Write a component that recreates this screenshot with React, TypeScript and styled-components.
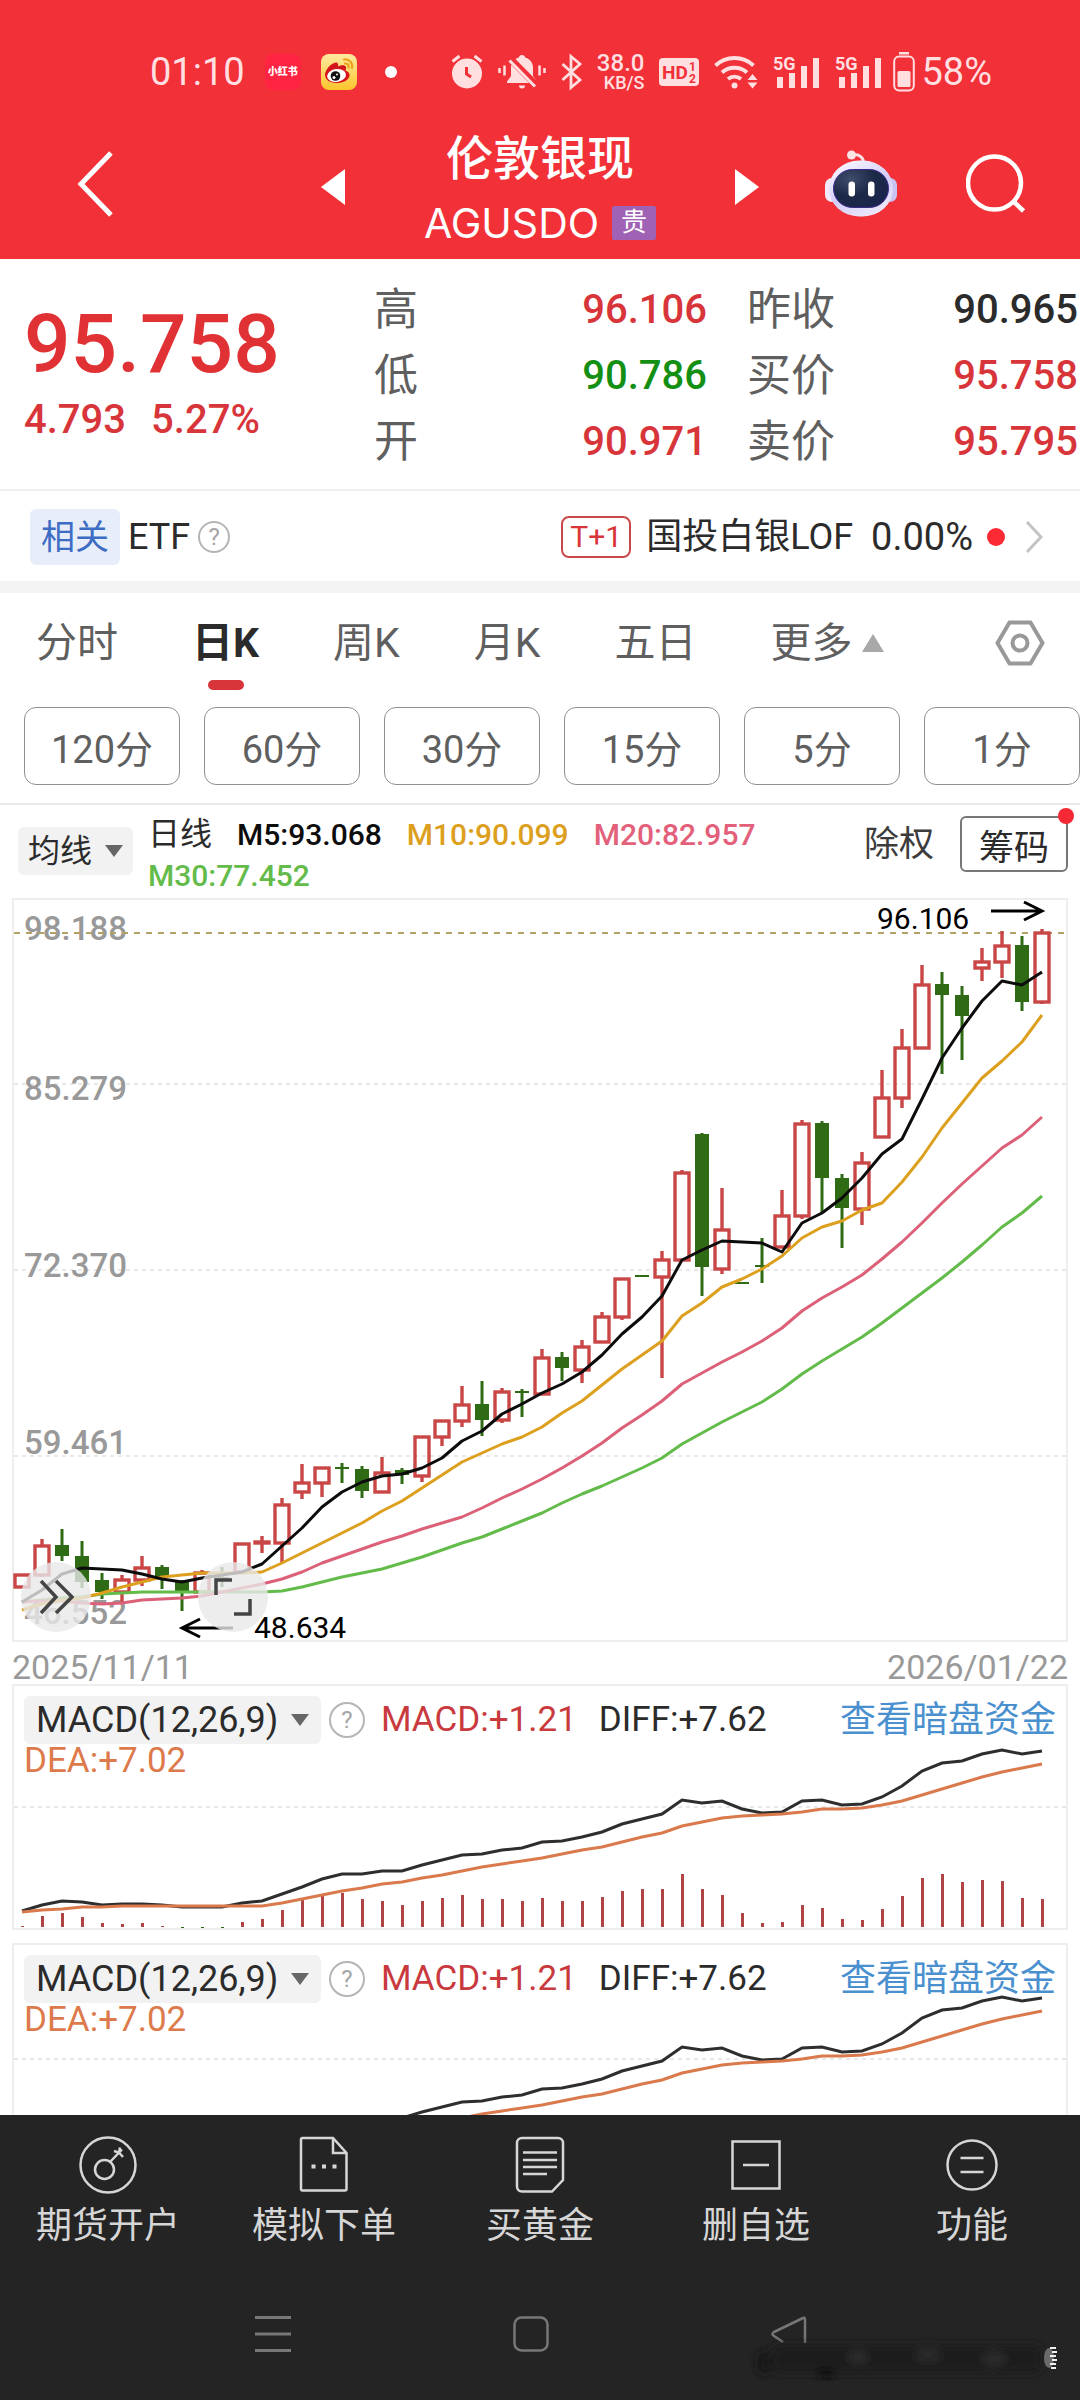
import React from 'react';
import styled, { createGlobalStyle } from 'styled-components';

const RED = '#d8353a';
const GREEN = '#138f13';
const INK = '#2b2b2b';
const GREY = '#5f5f5f';

const GlobalStyle = createGlobalStyle`
  * { box-sizing: border-box; }
  body {
    margin: 0;
    background: #ffffff;
    color: ${INK};
    font-family: Roboto, "Noto Sans CJK SC", sans-serif;
  }
  button, select { font: inherit; color: inherit; margin: 0; }
`;

const Page = styled.div`
  display: flex;
  flex-direction: column;
  height: 100vh;
  overflow: hidden;
`;

const PlainButton = styled.button`
  display: flex;
  align-items: center;
  justify-content: center;
  padding: 0;
  border: 0;
  background: none;
  svg { display: block; }
`;

/* ---------- Header ---------- */

const Header = styled.header`
  flex: none;
  background: #f23038;
  color: #ffffff;
`;

const StatusBar = styled.div`
  display: flex;
  justify-content: space-between;
  align-items: center;
  height: 112px;
  padding: 32px 88px 0 150px;
  color: #ffdfe0;
  font-size: 38px;
  line-height: 40px;
  svg { display: block; overflow: visible; }
`;

const StatusGroup = styled.div<{ $gap: number }>`
  display: flex;
  align-items: center;
  gap: ${p => p.$gap}px;
`;

const AppBadge = styled.span`
  width: 36px;
  height: 36px;
  border-radius: 8px;
  background: #ff2442;
  color: #ffffff;
  font-size: 10px;
  font-weight: 900;
  line-height: 36px;
  text-align: center;
  white-space: nowrap;
`;

const Dot = styled.span<{ $size: number; $color: string }>`
  flex: none;
  width: ${p => p.$size}px;
  height: ${p => p.$size}px;
  border-radius: 50%;
  background: ${p => p.$color};
`;

const NetSpeed = styled.span`
  display: flex;
  flex-direction: column;
  align-items: flex-end;
  font-weight: 500;
  font-size: 24px;
  line-height: 22px;
  small { font-size: 18px; line-height: 18px; }
`;

const NavBar = styled.div`
  display: grid;
  grid-template-columns: 1fr auto 1fr;
  align-items: center;
  height: 147px;
  padding: 0 55px 4px;
`;

const BackButton = styled(PlainButton)`
  justify-self: start;
  padding-left: 22px;
`;

const NavCenter = styled.div`
  display: flex;
  align-items: center;
  padding-top: 6px;
`;

const NavRight = styled.div`
  display: flex;
  justify-content: flex-end;
  align-items: center;
  gap: 69px;
`;

const TitleBlock = styled.div`
  min-width: 390px;
  padding-top: 8px;
  text-align: center;
`;

const Title = styled.h1`
  margin: 0;
  font-size: 47px;
  font-weight: 500;
  line-height: 64px;
`;

const Symbol = styled.div`
  display: flex;
  align-items: center;
  justify-content: center;
  gap: 13px;
  font-family: Inter, "Noto Sans CJK SC", sans-serif;
  font-size: 41px;
  line-height: 64px;
`;

const MetalTag = styled.span`
  width: 44px;
  height: 34px;
  border-radius: 2px;
  background: #9f62b4;
  font-size: 26px;
  line-height: 32px;
`;

/* ---------- Quote ---------- */

const Content = styled.main`
  flex: 1;
  min-height: 0;
  overflow: hidden;
`;

const Quote = styled.section`
  display: grid;
  grid-template-columns: 350fr 333fr 371fr;
  height: 232px;
  padding: 18px 2px 0 24px;
  border-bottom: 2px solid #efefef;
`;

const Price = styled.div`
  padding-top: 16px;
  color: #e03234;
  font-size: 82px;
  font-weight: 500;
  line-height: 102px;
`;

const Change = styled.div`
  display: flex;
  gap: 25px;
  color: ${RED};
  font-size: 40px;
  font-weight: 500;
  line-height: 50px;
`;

const StatColumn = styled.dl<{ $inset?: boolean }>`
  margin: 0;
  padding-left: ${p => (p.$inset ? 40 : 0)}px;
`;

const Stat = styled.div`
  display: flex;
  justify-content: space-between;
  line-height: 66px;
  dt { font-size: 44px; color: ${GREY}; }
`;

const StatValue = styled.dd<{ $color: string }>`
  margin: 0;
  color: ${p => p.$color};
  font-size: 40px;
  font-weight: 500;
`;

const Related = styled.section`
  display: flex;
  align-items: center;
  height: 90px;
  padding: 2px 37px 0 30px;
  font-size: 36px;
  line-height: 40px;
`;

const RelatedTag = styled.span`
  margin-right: 8px;
  padding: 8px 11px;
  border-radius: 6px;
  background: #e8edfa;
  color: #3d6cc4;
  font-size: 34px;
`;

const HelpSpace = styled.span`
  padding-left: 8px;
`;

const HelpButton = styled(PlainButton)<{ $size: number }>`
  flex: none;
  width: ${p => p.$size}px;
  height: ${p => p.$size}px;
  border: 2px solid #b5b5b5;
  border-radius: 50%;
  color: #a5a5a5;
  font-size: 24px;
  line-height: 24px;
`;

const RelatedFund = styled.a`
  display: flex;
  align-items: center;
  margin-left: auto;
  color: ${INK};
  text-decoration: none;
`;

const SettleTag = styled.span`
  margin-right: 15px;
  padding: 0 7px;
  border: 2px solid #c9484c;
  border-radius: 8px;
  color: ${RED};
  font-size: 30px;
  line-height: 38px;
`;

const FundChange = styled.span`
  margin: 0 14px 0 18px;
  font-size: 38px;
`;

const Chevron = styled.svg`
  display: block;
  margin-left: 20px;
`;

const Band = styled.div`
  height: 12px;
  background: #f4f4f4;
`;

/* ---------- Period tabs ---------- */

const Tabs = styled.nav`
  display: flex;
  align-items: flex-start;
  gap: 74px;
  padding: 22px 35px 17px 36px;
  color: ${GREY};
  font-size: 41px;
  line-height: 56px;
`;

const Tab = styled(PlainButton)<{ $active?: boolean }>`
  flex-direction: column;
  gap: 9px;
  color: ${p => (p.$active ? INK : GREY)};
  font-weight: ${p => (p.$active ? 700 : 400)};
  &::after {
    content: '';
    width: 36px;
    height: 10px;
    border-radius: 5px;
    background: ${p => (p.$active ? RED : 'transparent')};
  }
`;

const MoreLabel = styled.span`
  display: flex;
  align-items: center;
  gap: 9px;
`;

const Settings = styled(PlainButton)`
  margin-left: auto;
  height: 56px;
`;

const Minutes = styled.div`
  display: grid;
  grid-template-columns: repeat(6, 1fr);
  gap: 24px;
  padding: 0 0 18px 24px;
  border-bottom: 2px solid #e9e9e9;
`;

const MinuteButton = styled.button`
  height: 78px;
  padding: 0;
  border: 1px solid #8f8f8f;
  border-radius: 12px;
  background: none;
  color: ${GREY};
  font-size: 38px;
`;

/* ---------- Moving averages ---------- */

const Averages = styled.section`
  display: flex;
  align-items: flex-start;
  height: 93px;
  padding: 9px 12px 0 18px;
`;

const Picker = styled.label<{ $top: number; $size: number; $pad: number }>`
  display: flex;
  align-items: center;
  flex: none;
  gap: 12px;
  height: 48px;
  margin-top: ${p => p.$top}px;
  padding: 0 ${p => p.$pad}px;
  border-radius: 6px;
  background: #f2f2f2;
  color: ${INK};
  font-size: ${p => p.$size}px;
  select {
    appearance: none;
    padding: 0;
    border: 0;
    background: none;
    line-height: 48px;
  }
`;

const Legend = styled.div`
  display: flex;
  flex-wrap: wrap;
  align-items: baseline;
  flex: 1;
  column-gap: 25px;
  padding-left: 15px;
  font-size: 30px;
  line-height: 41px;
`;

const LegendName = styled.span`
  font-size: 32px;
`;

const LegendItem = styled.span<{ $color: string }>`
  color: ${p => p.$color};
  font-weight: 500;
`;

const AdjustButton = styled(PlainButton)`
  flex: none;
  margin: 9px 26px 0 0;
  color: #3c3c3c;
  font-size: 35px;
  line-height: 44px;
`;

const ChipsButton = styled(PlainButton)`
  position: relative;
  flex: none;
  width: 108px;
  height: 56px;
  margin-top: 2px;
  border: 2px solid #777777;
  border-radius: 6px;
  font-size: 35px;
  ${Dot} { position: absolute; top: -10px; right: -8px; }
`;

/* ---------- Charts ---------- */

const ChartBox = styled.section`
  position: relative;
  margin: 0 12px;
  border: 2px solid #eeeeee;
`;

const ChartSvg = styled.svg`
  display: block;
  overflow: visible;
  width: 100%;
  height: auto;
  font-family: Roboto, sans-serif;
`;

const FloatButton = styled(PlainButton)<{ $left: number }>`
  position: absolute;
  bottom: 8px;
  left: ${p => p.$left}px;
  width: 70px;
  height: 70px;
  border-radius: 50%;
  background: rgba(232, 232, 232, 0.8);
`;

const DateRow = styled.div`
  display: flex;
  justify-content: space-between;
  height: 42px;
  padding: 0 12px;
  color: #999999;
  font-size: 34px;
  line-height: 50px;
`;

const MacdBox = styled.section`
  position: relative;
  height: 246px;
  margin: 0 12px 13px;
  padding: 10px 10px 0;
  border: 2px solid #eeeeee;
  font-size: 35px;
`;

const MacdSvg = styled.svg`
  position: absolute;
  inset: 0;
  width: 100%;
  height: 100%;
  pointer-events: none;
`;

const MacdHead = styled.div`
  display: flex;
  align-items: center;
  height: 48px;
`;

const MacdValue = styled.span<{ $color: string; $left: number }>`
  display: block;
  margin-left: ${p => p.$left}px;
  color: ${p => p.$color};
  line-height: 34px;
`;

const FundsLink = styled.a`
  margin-left: auto;
  color: #4a90cf;
  font-size: 36px;
  line-height: 48px;
  text-decoration: none;
`;

/* ---------- Footer ---------- */

const Footer = styled.footer`
  flex: none;
  height: 285px;
  background: #242424;
  color: #d6d6d6;
`;

const Actions = styled.nav`
  display: grid;
  grid-template-columns: repeat(5, 1fr);
  padding-top: 20px;
`;

const Action = styled(PlainButton)`
  flex-direction: column;
  font-size: 36px;
  line-height: 62px;
`;

const SystemNav = styled.div`
  position: relative;
  display: flex;
  justify-content: center;
  gap: 222px;
  padding: 59px 18px 0 0;
`;

const Smudge = styled.svg`
  position: absolute;
  right: 20px;
  top: 80px;
`;

/* ---------- Data ---------- */

const FIRST_X = 22;
const STEP = 20;
const xOf = (i: number) => FIRST_X + i * STEP;

type Candle = [up: number, top: number, bottom: number, high: number, low: number];

const candles: Candle[] = [
  [1, 1574, 1586, 1574, 1588], [1, 1545, 1574, 1539, 1577], [0, 1545, 1556, 1529, 1561],
  [0, 1556, 1582, 1541, 1588], [0, 1580, 1592, 1573, 1599], [1, 1579, 1591, 1575, 1603],
  [1, 1567, 1579, 1556, 1586], [0, 1567, 1577, 1565, 1589], [0, 1582, 1592, 1580, 1611],
  [1, 1572, 1591, 1570, 1592], [0, 1577, 1579, 1567, 1587], [1, 1543, 1571, 1543, 1571],
  [1, 1541, 1542, 1536, 1553], [1, 1504, 1542, 1498, 1563], [1, 1482, 1491, 1464, 1499],
  [1, 1467, 1482, 1467, 1497], [0, 1467, 1469, 1463, 1483], [0, 1469, 1491, 1466, 1498],
  [1, 1472, 1491, 1457, 1493], [0, 1470, 1475, 1468, 1484], [1, 1436, 1475, 1436, 1482],
  [1, 1420, 1436, 1420, 1446], [1, 1404, 1420, 1386, 1427], [0, 1404, 1420, 1381, 1436],
  [1, 1391, 1419, 1388, 1423], [0, 1391, 1393, 1389, 1417], [1, 1357, 1393, 1349, 1393],
  [0, 1357, 1368, 1352, 1381], [1, 1346, 1369, 1340, 1383], [1, 1316, 1341, 1312, 1341],
  [1, 1278, 1316, 1278, 1320], [0, 1275, 1277, 1275, 1277], [1, 1259, 1276, 1251, 1378],
  [1, 1172, 1259, 1170, 1259], [0, 1134, 1267, 1133, 1296], [1, 1229, 1268, 1188, 1274],
  [0, 1282, 1284, 1282, 1284], [0, 1265, 1267, 1238, 1283], [1, 1215, 1246, 1190, 1246],
  [1, 1123, 1215, 1120, 1219], [0, 1123, 1178, 1121, 1213], [0, 1178, 1208, 1174, 1248],
  [1, 1162, 1208, 1152, 1225], [1, 1097, 1136, 1070, 1138], [1, 1047, 1097, 1029, 1108],
  [1, 984, 1047, 965, 1049], [0, 984, 995, 972, 1074], [0, 995, 1016, 986, 1060],
  [1, 961, 967, 948, 981], [1, 945, 961, 931, 978], [0, 945, 1002, 936, 1011],
  [1, 932, 1001, 929, 1004],
];

const averages = [
  {
    name: 'M30', color: '#63bb4a',
    ys: [1602, 1600, 1598, 1597, 1594, 1593, 1592, 1592, 1592, 1592, 1592, 1592, 1592, 1591, 1587, 1582, 1577, 1573, 1569, 1563, 1557, 1550, 1543, 1537, 1529, 1521, 1513, 1503, 1494, 1486, 1477, 1468, 1458, 1444, 1433, 1422, 1412, 1402, 1389, 1374, 1361, 1349, 1337, 1323, 1308, 1293, 1278, 1262, 1245, 1227, 1213, 1196],
  },
  {
    name: 'M20', color: '#dc6078',
    ys: [1602, 1601, 1601, 1603, 1604, 1603, 1600, 1599, 1598, 1596, 1592, 1588, 1584, 1579, 1572, 1563, 1556, 1549, 1542, 1536, 1529, 1523, 1517, 1508, 1498, 1489, 1479, 1468, 1456, 1443, 1428, 1415, 1401, 1384, 1373, 1362, 1352, 1341, 1328, 1311, 1298, 1287, 1275, 1259, 1242, 1223, 1203, 1184, 1166, 1148, 1135, 1117],
  },
  {
    name: 'M10', color: '#dd9f1e',
    ys: [1610, 1604, 1600, 1598, 1593, 1587, 1582, 1577, 1575, 1573, 1573, 1573, 1572, 1563, 1553, 1543, 1533, 1523, 1511, 1501, 1488, 1475, 1462, 1453, 1444, 1437, 1427, 1413, 1401, 1385, 1369, 1355, 1341, 1316, 1303, 1287, 1279, 1269, 1256, 1238, 1227, 1221, 1210, 1203, 1182, 1157, 1128, 1103, 1078, 1061, 1042, 1015],
  },
  {
    name: 'M5', color: '#0c0c0c',
    ys: [1602, 1590, 1574, 1568, 1569, 1570, 1574, 1579, 1582, 1578, 1575, 1572, 1564, 1546, 1528, 1507, 1492, 1482, 1476, 1474, 1468, 1458, 1441, 1431, 1414, 1404, 1393, 1384, 1372, 1355, 1334, 1317, 1296, 1260, 1250, 1241, 1242, 1243, 1252, 1223, 1213, 1198, 1178, 1154, 1139, 1099, 1058, 1028, 1001, 981, 985, 972],
  },
];

const diff = [1911, 1905, 1901, 1902, 1905, 1904, 1904, 1905, 1907, 1907, 1907, 1903, 1901, 1894, 1887, 1879, 1874, 1874, 1871, 1871, 1865, 1860, 1855, 1854, 1850, 1848, 1842, 1841, 1837, 1832, 1824, 1819, 1814, 1800, 1803, 1801, 1809, 1813, 1812, 1801, 1800, 1805, 1804, 1797, 1786, 1771, 1763, 1761, 1754, 1750, 1754, 1751];
const dea = [1912, 1910, 1909, 1907, 1907, 1906, 1906, 1906, 1906, 1906, 1906, 1906, 1906, 1903, 1899, 1895, 1891, 1888, 1884, 1882, 1878, 1875, 1871, 1867, 1864, 1861, 1858, 1854, 1850, 1847, 1842, 1837, 1833, 1826, 1822, 1818, 1816, 1815, 1814, 1812, 1809, 1809, 1808, 1805, 1801, 1795, 1789, 1783, 1777, 1772, 1768, 1764];
const bars = [1, 11, 14, 10, 4, 3, 4, 1, -1, -1, -1, 5, 8, 17, 27, 31, 34, 28, 26, 22, 26, 29, 32, 28, 28, 26, 29, 26, 26, 30, 36, 38, 38, 53, 38, 32, 14, 4, 5, 22, 19, 8, 7, 18, 31, 49, 53, 45, 47, 46, 29, 28];

const line = (ys: number[]) => ys.map((y, i) => `${xOf(i)},${y}`).join(' ');

const axis = [
  { label: '98.188', y: 940 },
  { label: '85.279', y: 1100 },
  { label: '72.370', y: 1277 },
  { label: '59.461', y: 1454 },
  { label: '46.552', y: 1624 },
];

const stats = [
  [
    { name: '高', value: '96.106', color: RED },
    { name: '低', value: '90.786', color: GREEN },
    { name: '开', value: '90.971', color: RED },
  ],
  [
    { name: '昨收', value: '90.965', color: INK },
    { name: '买价', value: '95.758', color: RED },
    { name: '卖价', value: '95.795', color: RED },
  ],
];

/* ---------- Icons ---------- */

const Caret = ({ up, size = 18, color = '#666666' }: { up?: boolean; size?: number; color?: string }) => (
  <svg width={size} height={size - 4} viewBox="0 0 18 14" preserveAspectRatio="none" aria-hidden="true">
    <path d={up ? 'M9 0 18 14H0z' : 'M0 1h18L9 13z'} fill={color} />
  </svg>
);

const WeiboIcon = () => (
  <svg width="36" height="36" viewBox="0 0 36 36" aria-hidden="true">
    <defs>
      <linearGradient id="weiboBg" x1="0" y1="0" x2="0" y2="1">
        <stop offset="0" stopColor="#ffe9a0" />
        <stop offset="1" stopColor="#fbc52c" />
      </linearGradient>
    </defs>
    <rect width="36" height="36" rx="8" fill="url(#weiboBg)" />
    <path d="M4 21c0-5 6-12 11-12.500 2 0 2.500 2 2 4 3-1.500 7-2 8 .5.500 1.500-.5 2.500-.5 3.500 3 1 4.500 3 4 5.500-1 4.500-7 7-13 7S4 26 4 21z" fill="#d5151c" />
    <ellipse cx="15.500" cy="21.500" rx="9.500" ry="6.500" fill="#fff" transform="rotate(-8 15.500 21.500)" />
    <circle cx="14.500" cy="22" r="4.800" fill="#111" />
    <circle cx="13" cy="23.500" r="1.500" fill="#fff" />
    <circle cx="16" cy="20.500" r="1" fill="#fff" />
    <path d="M23 5.500c5-.8 9 3.500 8 8.500M24 9.500c2.600-.2 4 1.700 3.600 4" fill="none" stroke="#eda11b" strokeWidth="2.200" strokeLinecap="round" />
  </svg>
);

const AlarmIcon = () => (
  <svg width="32" height="36" viewBox="0 0 32 36" fill="none" stroke="currentColor" aria-hidden="true">
    <circle cx="16" cy="19.500" r="15" fill="currentColor" stroke="none" />
    <path d="M1.500 7.500 8.500 2M30.500 7.500 23.500 2" strokeWidth="3" />
    <path d="M15.500 13v7l4.500 3" stroke="#f23038" strokeWidth="3" />
  </svg>
);

const MuteIcon = () => (
  <svg width="48" height="36" viewBox="0 0 48 36" fill="none" aria-hidden="true">
    <path d="M24 1c2 0 3 1.200 3 2.600 5 1.200 8 5.200 8 10.400v8l4 5.500V29H9v-1.500L13 22v-8c0-5.200 3-9.200 8-10.400C21 2.200 22 1 24 1z" fill="currentColor" />
    <path d="M21 31.500h6a3 3 0 0 1-6 0z" fill="currentColor" />
    <path d="M11 3.500 39 32" stroke="#f23038" strokeWidth="7" />
    <path d="M11.500 6.500 37 32.500" stroke="currentColor" strokeWidth="3" />
    <path d="M1.500 14v5M6.500 11.500v10M46.500 14v5M41.500 11.500v10" stroke="currentColor" strokeWidth="2.500" />
  </svg>
);

const BluetoothIcon = () => (
  <svg width="21" height="36" viewBox="0 0 21 36" fill="none" stroke="currentColor" strokeWidth="2.800" aria-hidden="true">
    <path d="M1.500 10 19 26l-9 7.500v-31L19 10 1.500 26" />
  </svg>
);

const HdIcon = () => (
  <svg width="40" height="28" viewBox="0 0 40 28" fontFamily="Roboto, sans-serif" fontWeight="700" fill="#f23038" aria-hidden="true">
    <rect width="40" height="28" rx="4" fill="currentColor" />
    <text x="3" y="21" fontSize="19">HD</text>
    <text x="30" y="13" fontSize="12">1</text>
    <text x="30" y="25" fontSize="12">2</text>
  </svg>
);

const WifiIcon = () => (
  <svg width="44" height="34" viewBox="0 0 44 34" fill="none" stroke="currentColor" aria-hidden="true">
    <path d="M1.500 10.500a28 28 0 0 1 38 0M8 17.500a19 19 0 0 1 25 0M14 24a10.500 10.500 0 0 1 13 0" strokeWidth="4" />
    <circle cx="20.500" cy="30.500" r="3" fill="currentColor" stroke="none" />
    <path d="M33.500 25 38.500 19l5 6zM33.500 27.500h10l-5 6z" fill="currentColor" stroke="none" />
  </svg>
);

const SignalIcon = () => (
  <svg width="47" height="34" viewBox="0 0 47 34" fill="currentColor" aria-hidden="true">
    <text x="0" y="15" fontFamily="Roboto, sans-serif" fontSize="18" fontWeight="700">5G</text>
    <rect x="4" y="22" width="6" height="11" />
    <rect x="16" y="18" width="6" height="15" />
    <rect x="28" y="11" width="6" height="22" />
    <rect x="40" y="3" width="6" height="30" />
  </svg>
);

const BatteryIcon = () => (
  <svg width="22" height="40" viewBox="0 0 22 40" aria-hidden="true">
    <rect x="6" y="0" width="10" height="2.500" fill="currentColor" />
    <rect x="1.200" y="4.500" width="19.600" height="34" rx="5" fill="none" stroke="currentColor" strokeWidth="2" />
    <rect x="4.500" y="19" width="13" height="16" rx="1.500" fill="currentColor" />
  </svg>
);

const RobotIcon = () => (
  <svg width="72" height="68" viewBox="0 0 72 68" aria-hidden="true">
    <defs>
      <linearGradient id="robotHead" x1="0" y1="0" x2="0.600" y2="1">
        <stop offset="0" stopColor="#ffffff" />
        <stop offset="0.600" stopColor="#d3cdf8" />
        <stop offset="1" stopColor="#ece6fa" />
      </linearGradient>
      <radialGradient id="robotFace" cx="0.300" cy="0.250" r="0.900">
        <stop offset="0" stopColor="#3f4c6b" />
        <stop offset="0.500" stopColor="#1c2946" />
        <stop offset="1" stopColor="#1b2350" />
      </radialGradient>
    </defs>
    <path d="M27 5.500c6-2 11 1 11.500 6.500" fill="none" stroke="#f7dfe4" strokeWidth="3" />
    <circle cx="26.500" cy="5" r="4.500" fill="#fbe3e6" />
    <rect x="0" y="28" width="14" height="24" rx="7" fill="#f2eafa" />
    <rect x="58" y="28" width="14" height="24" rx="7" fill="#c9c2f2" />
    <rect x="4" y="10.500" width="64" height="56" rx="30" ry="28" fill="url(#robotHead)" />
    <rect x="8.500" y="19.500" width="55" height="38" rx="19" fill="url(#robotFace)" stroke="#3a2a8c" strokeWidth="1" />
    <rect x="23.500" y="31.500" width="6.500" height="15" rx="3.200" fill="#fff" />
    <rect x="43" y="31.500" width="6.500" height="15" rx="3.200" fill="#fff" />
  </svg>
);

const Triangle = ({ right }: { right?: boolean }) => (
  <svg width="24" height="36" viewBox="0 0 24 36" fill="#fff" aria-hidden="true">
    <path d={right ? 'M0 0 24 18 0 36z' : 'M24 0 0 18l24 18z'} />
  </svg>
);

const actionIcons: Record<string, React.ReactNode> = {
  期货开户: (
    <>
      <circle cx="30" cy="30" r="27.500" />
      <circle cx="26.500" cy="34.500" r="9.500" />
      <path d="M32 27 44 14.500M36 16l5 1.500 4 4.500M41 17.500l1-5" />
    </>
  ),
  模拟下单: (
    <>
      <path d="M8.500 3H39l13.500 15v36a1.500 1.500 0 0 1-1.500 1.500H8.500A1.500 1.500 0 0 1 7 54V4.500A1.500 1.500 0 0 1 8.500 3zM39 3v15h13.500" />
      <path d="M17.500 31.500h4M28 31.500h4M38.500 31.500h4" strokeWidth="4" />
    </>
  ),
  买黄金: (
    <>
      <path d="M12 3h36a5 5 0 0 1 5 5v37L42 56.500H12a5 5 0 0 1-5-5V8a5 5 0 0 1 5-5z" />
      <path d="M13 17.500h34M13 25h34M13 32h34M13 39h24" />
    </>
  ),
  删自选: <path d="M6.500 6.500h47v47h-47zM17 30h26" />,
  功能: (
    <>
      <circle cx="30" cy="30" r="24.500" />
      <path d="M18.500 23h23M18.500 37h23" />
    </>
  ),
};

/* ---------- Sections ---------- */

const KChart = () => (
  <ChartBox aria-label="日K线图">
    <ChartSvg viewBox="14 900 1052 740" role="img">
      {[1084, 1270, 1456].map(y => (
        <line key={y} x1="14" x2="1066" y1={y} y2={y} stroke="#e8e8e8" strokeWidth="2" strokeDasharray="4 4" />
      ))}
      <g fill="#999999" fontSize="33" fontWeight="500">
        {axis.map(a => <text key={a.label} x="24" y={a.y}>{a.label}</text>)}
      </g>
      <line x1="14" x2="1066" y1="933" y2="933" stroke="#b3a268" strokeWidth="2" strokeDasharray="6 6" />
      {candles.map(([up, top, bottom, high, low], i) => {
        const x = xOf(i);
        return up ? (
          <g key={i} stroke="#c94646" strokeWidth="3.400" fill="none">
            <path d={`M${x} ${high}V${top}M${x} ${bottom}V${low}`} />
            <rect x={x - 7} y={top + 1} width="14" height={bottom - top} />
          </g>
        ) : (
          <g key={i} fill="#2e6b14">
            <rect x={x - 1.5} y={high} width="3" height={low - high} />
            <rect x={x - 7} y={top} width="14" height={bottom - top} />
          </g>
        );
      })}
      {averages.map(a => (
        <polyline key={a.name} points={line(a.ys)} fill="none" stroke={a.color} strokeWidth="3" strokeLinejoin="round" />
      ))}
      <g fontSize="30" fill="#000">
        <text x="877" y="929">96.106</text>
        <text x="254" y="1638">48.634</text>
      </g>
      <path d="M991 911h50M1024 902l18 9-18 9M233 1628h-50M200 1619l-18 9 18 9" fill="none" stroke="#000" strokeWidth="3" />
    </ChartSvg>
    <FloatButton $left={7} aria-label="展开">
      <svg width="36" height="36" viewBox="0 0 36 36" fill="none" stroke="#444" strokeWidth="3.500">
        <path d="M3 2 18 18 3 34M18 2l16 16-16 16" />
      </svg>
    </FloatButton>
    <FloatButton $left={184} aria-label="全屏">
      <svg width="38" height="38" viewBox="0 0 38 38" fill="none" stroke="#444" strokeWidth="3.500">
        <path d="M2 17V2h16M36 21v15H20" />
      </svg>
    </FloatButton>
  </ChartBox>
);

const MacdPanel = ({ gridY, lift }: { gridY: number; lift: number }) => (
  <MacdBox>
    <MacdSvg viewBox={`14 ${1686 + lift} 1052 242`} preserveAspectRatio="none" aria-hidden="true">
      <line x1="14" x2="1066" y1={gridY + lift} y2={gridY + lift} stroke="#e8e8e8" strokeWidth="2" strokeDasharray="4 4" />
      {bars.map((h, i) => (
        <rect
          key={i}
          x={xOf(i) - 1}
          y={h > 0 ? 1927 - h : 1927}
          width="3"
          height={Math.abs(h)}
          fill={h > 0 ? '#b04444' : '#2e6b14'}
        />
      ))}
      <polyline points={line(diff)} fill="none" stroke="#2e2e2e" strokeWidth="3" />
      <polyline points={line(dea)} fill="none" stroke="#d9794c" strokeWidth="3" />
    </MacdSvg>
    <MacdHead>
      <Picker $top={0} $size={36} $pad={12}>
        <select aria-label="指标"><option>MACD(12,26,9)</option></select>
        <Caret />
      </Picker>
      <HelpSpace><HelpButton $size={36} aria-label="说明">?</HelpButton></HelpSpace>
      <MacdValue $color="#c93a3e" $left={16}>MACD:+1.21</MacdValue>
      <MacdValue $color={INK} $left={22}>DIFF:+7.62</MacdValue>
      <FundsLink href="#funds">查看暗盘资金</FundsLink>
    </MacdHead>
    <MacdValue $color="#dd7a4c" $left={0}>DEA:+7.02</MacdValue>
  </MacdBox>
);

export default function App() {
  return (
    <Page>
      <GlobalStyle />
      <Header>
        <StatusBar>
          <StatusGroup $gap={28}>
            <StatusGroup $gap={20}>
              <span>01:10</span>
              <AppBadge>小红书</AppBadge>
              <WeiboIcon />
            </StatusGroup>
            <Dot $size={12} $color="#fff" />
          </StatusGroup>
          <StatusGroup $gap={15}>
            <AlarmIcon />
            <MuteIcon />
            <BluetoothIcon />
            <NetSpeed>38.0<small>KB/S</small></NetSpeed>
            <HdIcon />
            <WifiIcon />
            <SignalIcon />
            <StatusGroup $gap={11}>
              <SignalIcon />
              <StatusGroup $gap={6}>
                <BatteryIcon />
                <span>58%</span>
              </StatusGroup>
            </StatusGroup>
          </StatusGroup>
        </StatusBar>
        <NavBar>
          <BackButton aria-label="返回">
            <svg width="36" height="66" viewBox="0 0 36 66" fill="none" stroke="#fff" strokeWidth="5">
              <path d="M34 2 4 33l30 31" />
            </svg>
          </BackButton>
          <NavCenter>
            <PlainButton aria-label="上一个"><Triangle /></PlainButton>
            <TitleBlock>
              <Title>伦敦银现</Title>
              <Symbol>AGUSDO<MetalTag>贵</MetalTag></Symbol>
            </TitleBlock>
            <PlainButton aria-label="下一个"><Triangle right /></PlainButton>
          </NavCenter>
          <NavRight>
            <PlainButton aria-label="智能助手"><RobotIcon /></PlainButton>
            <PlainButton aria-label="搜索">
              <svg width="59" height="59" viewBox="0 0 59 59" fill="none" stroke="#fff" strokeWidth="4.500">
                <circle cx="28.500" cy="29" r="26.500" />
                <path d="M47 47l10.500 10" />
              </svg>
            </PlainButton>
          </NavRight>
        </NavBar>
      </Header>

      <Content>
        <Quote>
          <div>
            <Price>95.758</Price>
            <Change><span>4.793</span><span>5.27%</span></Change>
          </div>
          {stats.map((column, i) => (
            <StatColumn key={i} $inset={i > 0}>
              {column.map(s => (
                <Stat key={s.name}>
                  <dt>{s.name}</dt>
                  <StatValue $color={s.color}>{s.value}</StatValue>
                </Stat>
              ))}
            </StatColumn>
          ))}
        </Quote>

        <Related>
          <RelatedTag>相关</RelatedTag>
          <span>ETF</span>
          <HelpSpace><HelpButton $size={32} aria-label="说明">?</HelpButton></HelpSpace>
          <RelatedFund href="#fund">
            <SettleTag>T+1</SettleTag>
            国投白银LOF
            <FundChange>0.00%</FundChange>
            <Dot $size={18} $color="#fb2a35" />
            <Chevron width="18" height="32" viewBox="0 0 18 32" fill="none" stroke="#c4c4c4" strokeWidth="3">
              <path d="M2 1l14 15L2 31" />
            </Chevron>
          </RelatedFund>
        </Related>
        <Band />

        <Tabs>
          <Tab>分时</Tab>
          <Tab $active>日K</Tab>
          <Tab>周K</Tab>
          <Tab>月K</Tab>
          <Tab>五日</Tab>
          <Tab><MoreLabel>更多<Caret up size={22} color="#a8a8a8" /></MoreLabel></Tab>
          <Settings aria-label="设置">
            <svg width="50" height="46" viewBox="0 0 50 46" fill="none" stroke="#999" strokeWidth="4" strokeLinejoin="round">
              <path d="M14.500 2.500h21L47.500 23l-12 20.500h-21L2.500 23z" />
              <circle cx="25" cy="23" r="7.500" />
            </svg>
          </Settings>
        </Tabs>
        <Minutes>
          {['120分', '60分', '30分', '15分', '5分', '1分'].map(m => (
            <MinuteButton key={m}>{m}</MinuteButton>
          ))}
        </Minutes>

        <Averages>
          <Picker $top={13} $size={32} $pad={10}>
            <select aria-label="均线类型"><option>均线</option></select>
            <Caret />
          </Picker>
          <Legend>
            <LegendName>日线</LegendName>
            <LegendItem $color="#0c0c0c">M5:93.068</LegendItem>
            <LegendItem $color="#dd9f1e">M10:90.099</LegendItem>
            <LegendItem $color="#e3607a">M20:82.957</LegendItem>
            <LegendItem $color="#63bb4a">M30:77.452</LegendItem>
          </Legend>
          <AdjustButton>除权</AdjustButton>
          <ChipsButton>筹码<Dot $size={16} $color="#f52835" /></ChipsButton>
        </Averages>

        <KChart />
        <DateRow>
          <span>2025/11/11</span>
          <span>2026/01/22</span>
        </DateRow>
        <MacdPanel gridY={1807} lift={0} />
        <MacdPanel gridY={1800} lift={12} />
      </Content>

      <Footer>
        <Actions>
          {Object.entries(actionIcons).map(([label, icon]) => (
            <Action key={label}>
              <svg width="60" height="60" viewBox="0 0 60 60" fill="none" stroke="currentColor" strokeWidth="2.500" aria-hidden="true">
                {icon}
              </svg>
              {label}
            </Action>
          ))}
        </Actions>
        <SystemNav>
          <PlainButton aria-label="最近任务">
            <svg width="36" height="36" viewBox="0 0 36 36" stroke="#777" strokeWidth="3">
              <path d="M0 1.500h36M0 18h36M0 34.500h36" />
            </svg>
          </PlainButton>
          <PlainButton aria-label="主屏幕">
            <svg width="36" height="36" viewBox="0 0 36 36" fill="none" stroke="#777" strokeWidth="2.500">
              <rect x="1.500" y="1.500" width="33" height="33" rx="7" />
            </svg>
          </PlainButton>
          <PlainButton aria-label="后退">
            <svg width="36" height="36" viewBox="0 0 36 36" fill="none" stroke="#777" strokeWidth="2.500" strokeLinejoin="round">
              <path d="M34 27V3.500q0-3-3-1L3 16q-3 2 0 4l9 6" />
            </svg>
          </PlainButton>
          <Smudge width="312" height="44" viewBox="0 0 312 44" aria-hidden="true">
            <defs>
              <filter id="soft" x="-0.200" y="-0.500" width="1.400" height="2">
                <feGaussianBlur stdDeviation="4" />
              </filter>
            </defs>
            <g filter="url(#soft)">
              <rect x="24" y="8" width="270" height="28" rx="8" fill="#1e1e1e" />
              <ellipse cx="16" cy="26" rx="7" ry="12" fill="#171717" />
              <ellipse cx="78" cy="36" rx="9" ry="5" fill="#0c0c0c" />
              <ellipse cx="110" cy="20" rx="10" ry="8" fill="#2b2b2b" />
              <ellipse cx="180" cy="18" rx="14" ry="7" fill="#2c2c2c" />
              <ellipse cx="246" cy="22" rx="12" ry="8" fill="#2b2b2b" />
            </g>
            <ellipse cx="301" cy="21" rx="5" ry="10" fill="#8a8a8a" opacity="0.700" />
            <path d="M302 11h6M304 15h5M302 19h6M304 23h5M302 27h6M303 31h5" stroke="#f0f0f0" strokeWidth="2" />
          </Smudge>
        </SystemNav>
      </Footer>
    </Page>
  );
}
